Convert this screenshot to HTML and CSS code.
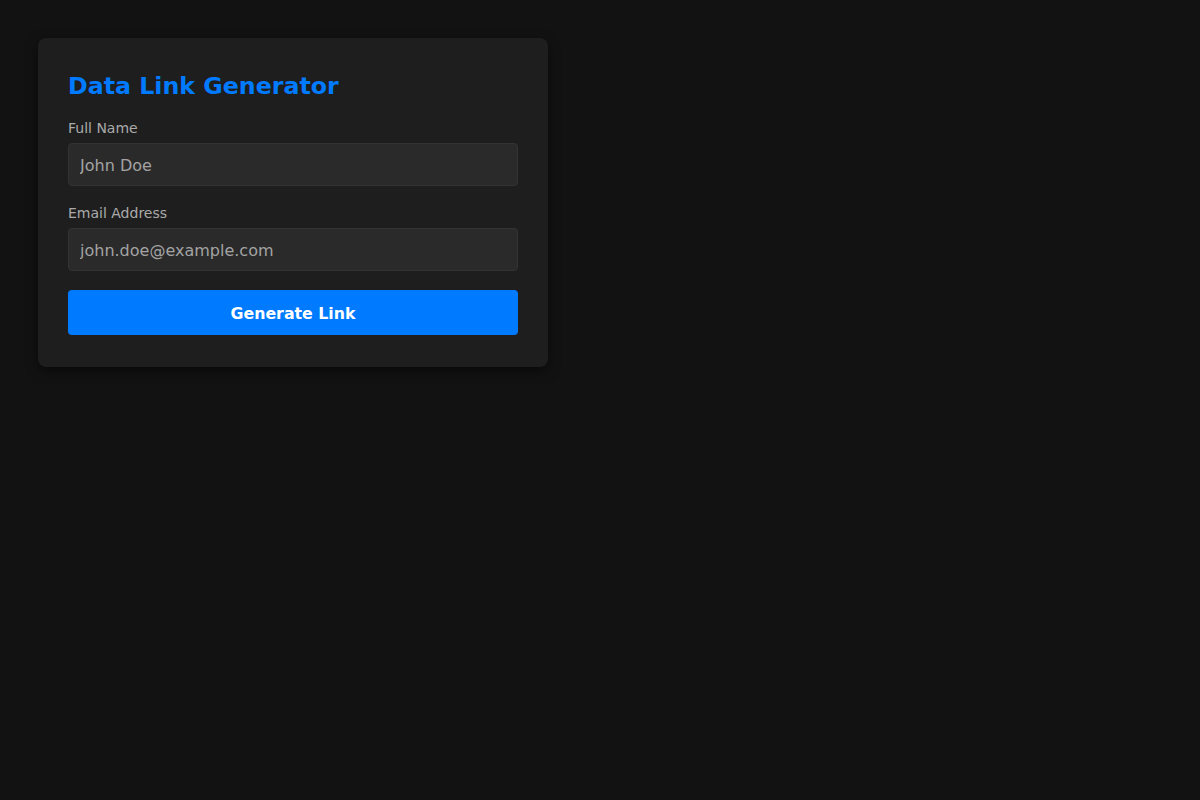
FILE: index.html
```html
<!DOCTYPE html>
<html lang="en">
<head>
<meta charset="utf-8">
<title>Data Link Generator</title>
<link rel="stylesheet" href="styles.css">
</head>
<body>
<div class="card">
  <h2 class="title">Data Link Generator</h2>
  <div class="field">
    <label class="label" for="name">Full Name</label>
    <input class="input" id="name" type="text" placeholder="John Doe">
  </div>
  <div class="field">
    <label class="label" for="email">Email Address</label>
    <input class="input" id="email" type="email" placeholder="john.doe@example.com">
  </div>
  <button class="btn" type="button">Generate Link</button>
</div>
</body>
</html>
```
FILE: styles.css
```css
html, body {
  margin: 0;
  background: #121212;
}
body {
  padding: 38px;
  font-family: "DejaVu Sans", sans-serif;
  color: #e0e0e0;
}
.card {
  width: 450px;
  padding: 30px 30px 32px;
  background: #1e1e1e;
  border-radius: 8px;
  box-shadow: 0 4px 12px rgba(0, 0, 0, 0.5);
}
.title {
  margin: 4px 0 20px;
  font-size: 23.7px;
  font-weight: bold;
  color: #007bff;
}
.field {
  margin-bottom: 19px;
}
.label {
  display: block;
  margin-bottom: 7px;
  font-size: 14px;
  color: #aaaaaa;
}
.input {
  display: block;
  box-sizing: border-box;
  width: 100%;
  height: 43px;
  padding: 2px 11px 0;
  margin: 0;
  font-family: "DejaVu Sans", sans-serif;
  font-size: 16px;
  color: #e0e0e0;
  background: #2a2a2a;
  border: 1px solid #333333;
  border-radius: 4px;
  outline: none;
}
.input::placeholder {
  color: #a3a3a3;
  opacity: 1;
}
.btn {
  display: block;
  width: 100%;
  height: 45px;
  margin: 0;
  padding: 2px 0 0;
  font-family: "DejaVu Sans", sans-serif;
  font-size: 15.8px;
  font-weight: bold;
  color: #ffffff;
  background: #007bff;
  border: none;
  border-radius: 4px;
}
```
